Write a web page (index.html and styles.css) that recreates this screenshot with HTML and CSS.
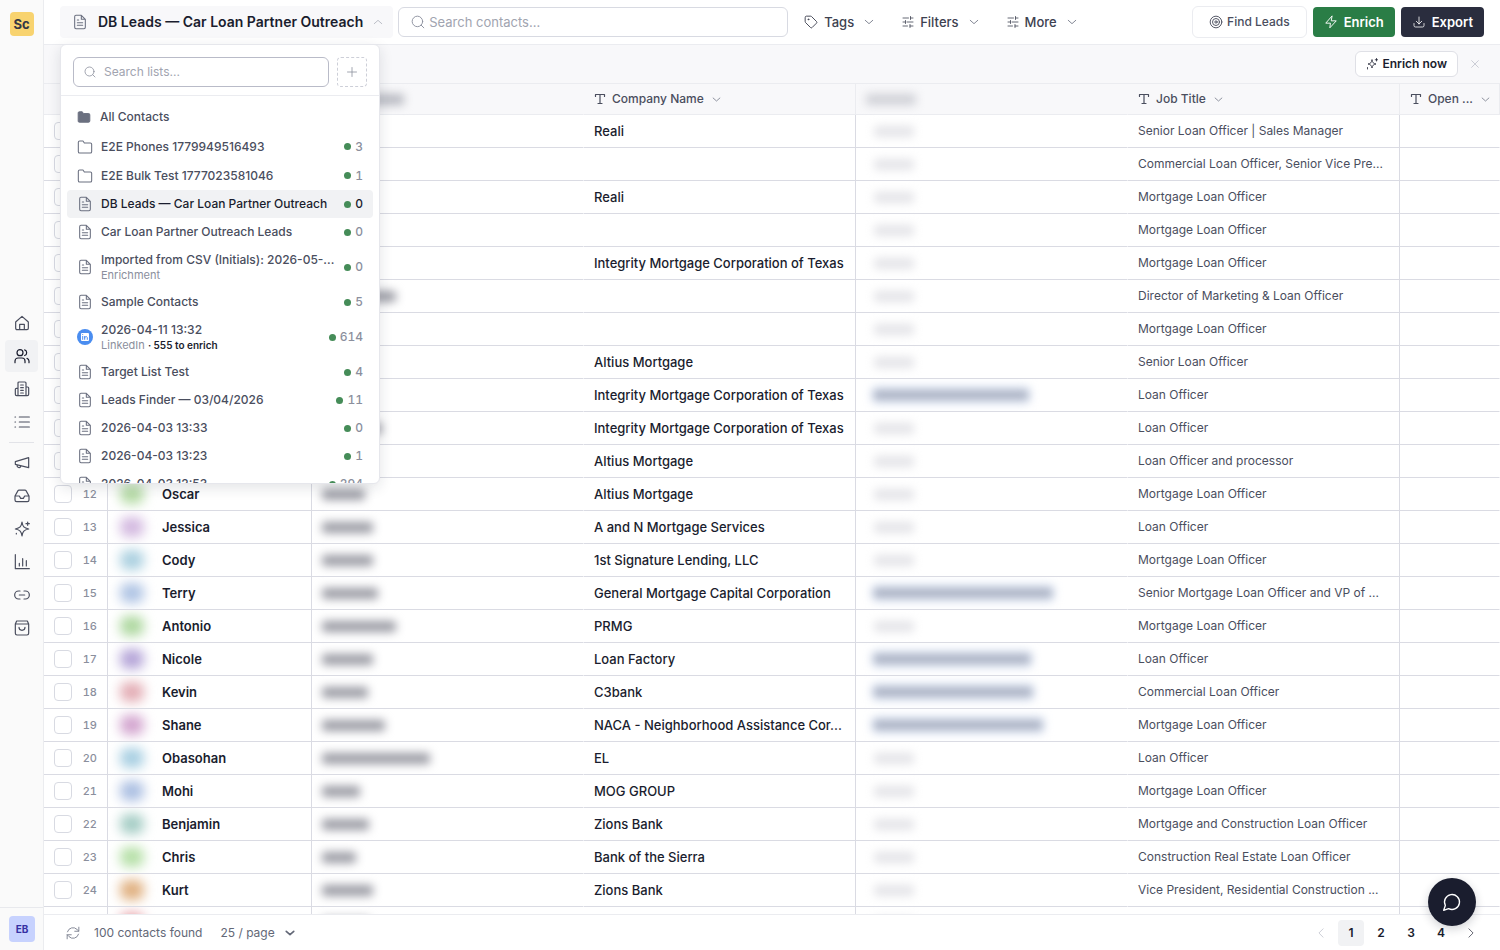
FILE: index.html
```html
<!DOCTYPE html>
<html lang="en">
<head>
<meta charset="utf-8">
<title>Contacts</title>
<meta name="viewport" content="width=device-width, initial-scale=1">
<link rel="stylesheet" href="styles.css">
</head>
<body>
<svg class="sprite" aria-hidden="true">
  <symbol id="file" viewBox="0 0 24 24"><path d="M14 2H6a2 2 0 0 0-2 2v16a2 2 0 0 0 2 2h12a2 2 0 0 0 2-2V8z M14 2v6h6 M8 9h2 M8 13h8 M8 17h8"/></symbol>
  <symbol id="folder" viewBox="0 0 24 24"><path d="M22 19a2 2 0 0 1-2 2H4a2 2 0 0 1-2-2V5a2 2 0 0 1 2-2h5l2 3h9a2 2 0 0 1 2 2z"/></symbol>
  <symbol id="search" viewBox="0 0 24 24"><circle cx="11" cy="11" r="9"/><path d="m22 22-4.500-4.500"/></symbol>
  <symbol id="down" viewBox="0 0 24 24"><path d="m3 8 9 8 9-8"/></symbol>
  <symbol id="up" viewBox="0 0 24 24"><path d="m3 16 9-8 9 8"/></symbol>
  <symbol id="left" viewBox="0 0 24 24"><path d="m17 2-10 10 10 10"/></symbol>
  <symbol id="right" viewBox="0 0 24 24"><path d="m7 2 10 10L7 22"/></symbol>
  <symbol id="plus" viewBox="0 0 24 24"><path d="M12 3v18M3 12h18"/></symbol>
  <symbol id="close" viewBox="0 0 24 24"><path d="m4 4 16 16M20 4 4 20"/></symbol>
  <symbol id="tag" viewBox="0 0 24 24"><path d="M2 4a2 2 0 0 1 2-2h7.500a2 2 0 0 1 1.400.6l8.500 8.500a2 2 0 0 1 0 2.900L14 21.400a2 2 0 0 1-2.900 0L2.600 12.900A2 2 0 0 1 2 11.500z"/><circle cx="7.500" cy="7.500" r=".8"/></symbol>
  <symbol id="sliders" viewBox="0 0 24 24"><path d="M2 4h11M17 4h5M17 1v6M2 12h4M10 12h12M7 9v6M2 20h9M16 20h6M16 17v6"/></symbol>
  <symbol id="target" viewBox="0 0 24 24"><circle cx="12" cy="12" r="10"/><circle cx="12" cy="12" r="6"/><circle cx="12" cy="12" r="2"/></symbol>
  <symbol id="bolt" viewBox="0 0 24 24"><path d="M13.500 2 3 14h8l-1 8L21 10h-8z"/></symbol>
  <symbol id="download" viewBox="0 0 24 24"><path d="M12 2v14M6.500 10.500 12 16l5.500-5.500M2 15v4a3 3 0 0 0 3 3h14a3 3 0 0 0 3-3v-4"/></symbol>
  <symbol id="spark" viewBox="0 0 24 24"><path d="M12 4c.8 5.200 2.800 7.200 8 8-5.200.8-7.200 2.800-8 8-.8-5.200-2.800-7.200-8-8 5.200-.8 7.200-2.800 8-8z M21 1v5M18.500 3.500h5M3 19v3"/></symbol>
  <symbol id="text" viewBox="0 0 24 24"><path d="M3 7V3h18v4M12 3v18M8 21h8"/></symbol>
  <symbol id="home" viewBox="0 0 24 24"><path d="M2.500 10.500 12 2l9.500 8.500V20a2 2 0 0 1-2 2h-15a2 2 0 0 1-2-2z M8.500 22v-8h7v8"/></symbol>
  <symbol id="users" viewBox="0 0 24 24"><circle cx="9" cy="7" r="4.500"/><path d="M1.500 22v-2.500A4.500 4.500 0 0 1 6 15h6a4.500 4.500 0 0 1 4.500 4.500V22M16 2.800a4.500 4.500 0 0 1 0 8.500M19.500 15.500a4.500 4.500 0 0 1 3 4V22"/></symbol>
  <symbol id="building" viewBox="0 0 24 24"><path d="M6 22V3a1.500 1.500 0 0 1 1.500-1.500h9A1.500 1.500 0 0 1 18 3v19M6 11H3.500A1.500 1.500 0 0 0 2 12.500V20a2 2 0 0 0 2 2h16a2 2 0 0 0 2-2V10.500A1.500 1.500 0 0 0 20.500 9H18M10 6h4M10 10h4M10 14h4M10 18h4"/></symbol>
  <symbol id="list" viewBox="0 0 24 24"><path d="M8 4.500h15M8 12h15M8 19.500h15M1.500 4.500h.8M1.500 12h.8M1.500 19.500h.8"/></symbol>
  <symbol id="horn" viewBox="0 0 24 24"><path d="m2 10 20-6v15L2 14zM10 17.500a3 3 0 0 1-5.500-1.700"/></symbol>
  <symbol id="inbox" viewBox="0 0 24 24"><path d="M22.500 12H16l-2 3.500h-4L8 12H1.500M6 4 1.500 12v6a2.500 2.500 0 0 0 2.500 2.500h16a2.500 2.500 0 0 0 2.500-2.500v-6L18 4a2 2 0 0 0-1.500-.8h-9A2 2 0 0 0 6 4z"/></symbol>
  <symbol id="stars" viewBox="0 0 24 24"><path d="M12 1.500c1 7 3 9 10 10.500-7 1.500-9 3.500-10 10.500C11 15.500 9 13.500 2 12c7-1.500 9-3.500 10-10.500zM20.500 1.500v5M18 4h5M3.500 18.500v1"/></symbol>
  <symbol id="chart" viewBox="0 0 24 24"><path d="M2 1v21h21M8 18v-4M13 18V7M18.500 18V10"/></symbol>
  <symbol id="link" viewBox="0 0 24 24"><path d="M9 18H7A6 6 0 0 1 7 6h2M15 6h2a6 6 0 0 1 0 12h-2M8 12h8"/></symbol>
  <symbol id="bag" viewBox="0 0 24 24"><path d="m2 6 2-4.500h16L22 6v14a2.500 2.500 0 0 1-2.500 2.500h-15A2.500 2.500 0 0 1 2 20zM2 6h20M16.500 11a4.500 4.500 0 0 1-9 0"/></symbol>
  <symbol id="refresh" viewBox="0 0 24 24"><path d="M22 2v7h-7M2 22v-7h7M2.500 10A9.800 9.800 0 0 1 19 6l3 3M21.500 14A9.800 9.800 0 0 1 5 18l-3-3"/></symbol>
  <symbol id="chat" viewBox="0 0 24 24"><path d="M7.900 20A9 9 0 1 0 4 16.100L2 22z"/></symbol>
</svg>

<div class="app">
  <aside class="sidebar">
    <a class="logo" href="#">Sc</a>
    <nav class="nav" aria-label="Main">
      <a href="#" aria-label="Home"><svg><use href="#home"/></svg></a>
      <a href="#" class="active" aria-label="Contacts"><svg><use href="#users"/></svg></a>
      <a href="#" aria-label="Companies"><svg><use href="#building"/></svg></a>
      <a href="#" aria-label="Lists"><svg><use href="#list"/></svg></a>
      <hr>
      <a href="#" aria-label="Campaigns"><svg><use href="#horn"/></svg></a>
      <a href="#" aria-label="Inbox"><svg><use href="#inbox"/></svg></a>
      <a href="#" aria-label="Assistant"><svg><use href="#stars"/></svg></a>
      <a href="#" aria-label="Reports"><svg><use href="#chart"/></svg></a>
      <a href="#" aria-label="Links"><svg><use href="#link"/></svg></a>
      <a href="#" aria-label="Store"><svg><use href="#bag"/></svg></a>
    </nav>
    <div class="account"><button class="avatar" type="button">EB</button></div>
  </aside>

  <main class="main">
    <header class="topbar">
      <div class="picker">
        <button class="picker-toggle" type="button" aria-expanded="true">
          <svg class="i16"><use href="#file"/></svg><span>DB Leads — Car Loan Partner Outreach</span><svg class="i10 faint"><use href="#up"/></svg>
        </button>
        <section class="panel" aria-label="Lists">
          <div class="panel-head">
            <label class="field list-search"><svg class="i12"><use href="#search"/></svg><input type="text" placeholder="Search lists..." aria-label="Search lists"></label>
            <button class="add" type="button" aria-label="New list"><svg class="i12"><use href="#plus"/></svg></button>
          </div>
          <div class="lists">
            <button class="item all" type="button"><svg class="i14 solid"><use href="#folder"/></svg><span class="label">All Contacts</span></button>
            <button class="item dir" type="button"><svg class="i16"><use href="#folder"/></svg><span class="label">E2E Phones 1779949516493</span><span class="count">3</span></button>
            <button class="item dir" type="button"><svg class="i16"><use href="#folder"/></svg><span class="label">E2E Bulk Test 1777023581046</span><span class="count">1</span></button>
            <button class="item current" type="button"><svg class="i16"><use href="#file"/></svg><span class="label">DB Leads — Car Loan Partner Outreach</span><span class="count">0</span></button>
            <button class="item" type="button"><svg class="i16"><use href="#file"/></svg><span class="label">Car Loan Partner Outreach Leads</span><span class="count">0</span></button>
            <button class="item tall" type="button"><svg class="i16"><use href="#file"/></svg><span class="label">Imported from CSV (Initials): 2026-05-...<small>Enrichment</small></span><span class="count">0</span></button>
            <button class="item" type="button"><svg class="i16"><use href="#file"/></svg><span class="label">Sample Contacts</span><span class="count">5</span></button>
            <button class="item tall" type="button"><svg class="linkedin" viewBox="0 0 16 16"><circle cx="8" cy="8" r="8" fill="#4a8df0" stroke="none"/><rect x="4" y="4" width="8" height="8" rx="1" fill="#fff" stroke="none"/><path d="M5.700 7.400v3M5.700 5.500v.2M7.700 10.400v-3M7.700 8.800c0-1.700 2.600-1.700 2.600 0v1.600" stroke="#4a8df0"/></svg><span class="label">2026-04-11 13:32<small>LinkedIn <b>· 555 to enrich</b></small></span><span class="count">614</span></button>
            <button class="item" type="button"><svg class="i16"><use href="#file"/></svg><span class="label">Target List Test</span><span class="count">4</span></button>
            <button class="item" type="button"><svg class="i16"><use href="#file"/></svg><span class="label">Leads Finder — 03/04/2026</span><span class="count">11</span></button>
            <button class="item" type="button"><svg class="i16"><use href="#file"/></svg><span class="label">2026-04-03 13:33</span><span class="count">0</span></button>
            <button class="item" type="button"><svg class="i16"><use href="#file"/></svg><span class="label">2026-04-03 13:23</span><span class="count">1</span></button>
            <button class="item" type="button"><svg class="i16"><use href="#file"/></svg><span class="label">2026-04-03 12:53</span><span class="count">294</span></button>
          </div>
        </section>
      </div>
      <label class="field contact-search"><svg class="i14"><use href="#search"/></svg><input type="text" placeholder="Search contacts..." aria-label="Search contacts"></label>
      <div class="tools">
        <button type="button"><svg class="i14"><use href="#tag"/></svg>Tags<svg class="i10"><use href="#down"/></svg></button>
        <button type="button"><svg class="i12"><use href="#sliders"/></svg>Filters<svg class="i10"><use href="#down"/></svg></button>
        <button type="button"><svg class="i12"><use href="#sliders"/></svg>More<svg class="i10"><use href="#down"/></svg></button>
      </div>
      <div class="actions">
        <button class="find" type="button"><svg class="i14"><use href="#target"/></svg>Find Leads</button>
        <button class="enrich" type="button"><svg class="i14"><use href="#bolt"/></svg>Enrich</button>
        <button class="export" type="button"><svg class="i12"><use href="#download"/></svg>Export</button>
      </div>
    </header>

    <div class="banner">
      <button class="enrich-now" type="button"><svg class="i12"><use href="#spark"/></svg>Enrich now</button>
      <button class="dismiss" type="button" aria-label="Dismiss"><svg class="i10"><use href="#close"/></svg></button>
    </div>

    <div class="grid">
      <table>
        <colgroup><col class="c-num"><col class="c-first"><col class="c-std"><col class="c-std"><col class="c-std"><col class="c-std"><col></colgroup>
        <thead>
          <tr>
            <th></th><th></th>
            <th class="open-edge"><span class="smudge head-last"></span></th>
            <th><div class="th"><svg class="i12"><use href="#text"/></svg><span>Company Name</span><svg class="i8"><use href="#down"/></svg></div></th>
            <th class="open-edge"><span class="smudge head-email"></span></th>
            <th><div class="th"><svg class="i12"><use href="#text"/></svg><span>Job Title</span><svg class="i8"><use href="#down"/></svg></div></th>
            <th><div class="th"><svg class="i12"><use href="#text"/></svg><span>Open ...</span><svg class="i8"><use href="#down"/></svg></div></th>
          </tr>
        </thead>
        <tbody id="rows"></tbody>
      </table>
    </div>

    <footer class="footer">
      <button class="reload" type="button" aria-label="Refresh"><svg class="i14"><use href="#refresh"/></svg></button>
      <span class="total">100 contacts found</span>
      <span class="size"><select aria-label="Rows per page"><option>25 / page</option></select><svg class="i10"><use href="#down"/></svg></span>
      <nav class="pages" aria-label="Pages">
        <button type="button" aria-label="Previous" disabled><svg class="i10"><use href="#left"/></svg></button>
        <button type="button" class="on">1</button>
        <button type="button">2</button>
        <button type="button">3</button>
        <button type="button">4</button>
        <button type="button" aria-label="Next"><svg class="i10"><use href="#right"/></svg></button>
      </nav>
    </footer>
  </main>
  <button class="chat" type="button" aria-label="Chat"><svg><use href="#chat"/></svg></button>
</div>
<script src="app.js"></script>
</body>
</html>
```

FILE: styles.css
```css
* { box-sizing: border-box; }
body { margin: 0; font: 500 13px/16px Inter, sans-serif; color: #1a1d2e; background: #fff; }
button, input, select { font: inherit; color: inherit; }
button { border: 0; padding: 0; background: none; cursor: pointer; }
a { color: inherit; text-decoration: none; }
svg { fill: none; stroke: currentColor; stroke-width: 1.6; stroke-linecap: round; stroke-linejoin: round; flex: none; }
.sprite { display: none; }
.i8 { width: 9px; height: 9px; }
.i10 { width: 10px; height: 10px; }
.i12 { width: 12px; height: 12px; }
.i14 { width: 14px; height: 14px; }
.i16 { width: 16px; height: 16px; }
.faint { color: #9da1ad; }

.app { display: flex; height: 100vh; }
.sidebar { width: 44px; flex: none; display: flex; flex-direction: column; align-items: center; background: #fafafa; border-right: 1px solid #ebecef; }
.logo { width: 24px; height: 24px; margin-top: 12px; border-radius: 4px; background: #f8d36f; color: #333745; font-weight: 700; line-height: 24px; text-align: center; }
.nav { flex: 1; width: 100%; padding-top: 8px; display: flex; flex-direction: column; justify-content: center; align-items: center; gap: 1px; color: #4a4e5e; }
.nav a { width: 33px; height: 32px; display: grid; place-items: center; border-radius: 4px; }
.nav svg { width: 16px; height: 16px; stroke-width: 1.8; }
.nav .active { background: #f1f2f4; color: #1a1d2e; }
.nav hr { width: 25px; margin: 3px 0; border: 0; border-top: 1px solid #e2e3e8; }
.account { width: 100%; padding: 8px 0 8px 9px; border-top: 1px solid #e8e9ed; }
.avatar { display: block; width: 26px; height: 26px; border-radius: 4px; background: #c7d2fe; color: #3730a3; font-size: 10px; font-weight: 700; }

.main { flex: 1; min-width: 0; display: flex; flex-direction: column; }
.topbar { display: flex; align-items: center; height: 45px; flex: none; padding: 0 16px; border-bottom: 1px solid #ebecf0; }
.picker { position: relative; }
.picker-toggle { display: flex; align-items: center; height: 32px; padding: 0 10px 0 12px; gap: 10px; border-radius: 4px; background: #f8f8fa; font-size: 14px; font-weight: 600; white-space: nowrap; }
.picker-toggle svg:first-child { color: #6b7080; }
.field { display: flex; align-items: center; height: 30px; border: 1px solid #d8dae2; border-radius: 6px; background: #fff; color: #8b8f9d; }
.field input { flex: 1; min-width: 0; border: 0; outline: 0; padding: 0; background: none; font-weight: 400; color: #1a1d2e; }
.field input::placeholder { color: #a1a4b0; opacity: 1; }
.contact-search { flex: 0 1 390px; margin-left: 5px; padding: 0 12px; gap: 4px; }
.tools { display: flex; gap: 28px; margin-left: 16px; color: #3d4150; }
.tools button { display: flex; align-items: center; gap: 6px; height: 30px; }
.tools svg:last-child { margin-left: 4px; color: #6b7080; stroke-width: 2; }
.actions { display: flex; align-items: center; gap: 6px; margin-left: auto; }
.actions button { display: flex; align-items: center; height: 30px; padding: 0 11px; gap: 6px; border-radius: 4px; color: #fff; font-weight: 600; white-space: nowrap; }
.actions .find { height: 32px; padding: 0 16px; gap: 4px; border: 1px solid #ebecf0; border-radius: 6px; color: #4a4e5e; font-size: 12px; font-weight: 500; }
.actions .enrich { background: #2a7d46; }
.actions .export { background: #2a2d3e; gap: 7px; padding-left: 12px; }

.panel { position: absolute; z-index: 5; top: 38px; left: 0; width: 320px; height: 440px; display: flex; flex-direction: column; overflow: hidden; border: 1px solid #e6e7ec; border-radius: 6px; background: #fff; box-shadow: 0 4px 14px rgba(26, 29, 46, .12); font-size: 12px; }
.panel-head { display: flex; gap: 8px; padding: 12px 12px 8px; border-bottom: 1px solid #ebecf0; }
.list-search { flex: 1; padding: 0 10px; gap: 8px; border-color: #b9bbc8; }
.add { display: grid; place-items: center; width: 30px; height: 30px; border: 1px dashed #cdcfd8; border-radius: 4px; color: #8b8f9d; }
.lists { flex: 1; overflow: hidden; padding: 6px; }
.item { display: flex; align-items: center; width: 100%; height: 28px; padding: 0 10px; gap: 8px; border-radius: 4px; color: #4a4e5e; text-align: left; }
.item.all { height: 30px; gap: 9px; }
.item.dir { height: 29px; }
.item.tall { height: 42px; }
.item.current { background: #f1f2f4; color: #1a1d2e; }
.item svg { color: #6b7080; }
.item .solid { fill: #6b7080; }
.item .linkedin { width: 16px; height: 16px; stroke-width: 1; }
.label { flex: 1; min-width: 0; overflow: hidden; text-overflow: ellipsis; white-space: nowrap; }
.label small { display: block; font-size: 11px; line-height: 14px; font-weight: 400; color: #8b8f9d; }
.label b { font-size: 10px; font-weight: 600; color: #1a1d2e; }
.count { display: flex; align-items: center; gap: 4px; font-variant-numeric: tabular-nums; color: #8b8f9d; }
.current .count { color: #1a1d2e; }
.count::before { content: ""; width: 7px; height: 7px; border-radius: 50%; background: #458c58; }

.banner { display: flex; align-items: center; justify-content: flex-end; gap: 12px; height: 39px; flex: none; padding: 0 20px; border-bottom: 1px solid #ebecf0; background: #f8f8fa; }
.enrich-now { display: flex; align-items: center; gap: 4px; height: 26px; padding: 0 10px; border: 1px solid #dfe0e6; border-radius: 6px; background: #fff; font-size: 12px; font-weight: 600; }
.dismiss { display: grid; color: #b4b7c2; }

.grid { flex: 1; min-height: 0; overflow: hidden; }
table { width: 100%; table-layout: fixed; border-collapse: separate; border-spacing: 0; }
.c-num { width: 64px; }
.c-first { width: 204px; }
.c-std { width: 272px; }
th { height: 31px; padding: 0 10px; background: #f8f8fa; border-bottom: 1px solid #ebecf0; border-right: 1px solid #ebecf0; text-align: left; font-size: 12px; font-weight: 500; color: #4a4e5e; }
td { height: 33px; padding: 0 10px; border-bottom: 1px solid #dadbe3; border-right: 1px solid #dadbe3; overflow: hidden; text-overflow: ellipsis; white-space: nowrap; }
th.open-edge, td.open-edge, tbody td:last-child { border-right-color: transparent; }
.th { display: flex; align-items: center; gap: 6px; white-space: nowrap; }
.th svg:last-child { margin-left: 2px; color: #6b7080; stroke-width: 2; }
.th svg:first-child { stroke-width: 2.4; }
.pick { display: flex; align-items: center; justify-content: space-between; font-size: 11px; font-variant-numeric: tabular-nums; color: #8b8f9d; }
.pick input { appearance: none; width: 18px; height: 18px; margin: 0; border: 1px solid #d8dae2; border-radius: 4px; background: #fff; }
.person { display: flex; align-items: center; gap: 18px; padding-left: 2px; font-weight: 600; }
.face { width: 24px; height: 20px; border-radius: 8px; filter: blur(6px); }
.job { font-size: 12px; font-weight: 400; color: #4a4e5e; }
.smudge { display: block; height: 11px; border-radius: 3px; background: #9a9ba4; filter: blur(5px); }
.head-last { width: 82px; background: #b6b8c0; }
.head-email { width: 50px; background: #cfd0d6; }
.none { width: 40px; margin-left: 8px; background: #e4e4e8; }
.mail { height: 20px; padding: 5px 4px; margin-left: 4px; border-radius: 8px; background: #e6edf9; filter: blur(4px); }
.mail::before { content: ""; display: block; height: 10px; background: #abb2c3; }

.footer { display: flex; align-items: center; flex: none; height: 36px; padding: 0 16px 0 22px; border-top: 1px solid #ebecf0; color: #636877; font-size: 12px; font-weight: 400; }
.reload { display: grid; color: #7d8190; }
.total { margin-left: 14px; }
.size { display: flex; align-items: center; margin-left: 18px; gap: 10px; }
.size select { appearance: none; border: 0; padding: 0; background: none; }
.size svg { stroke-width: 4; }
.pages { display: flex; gap: 4px; margin-left: auto; color: #1a1d2e; }
.pages button { display: grid; place-items: center; width: 26px; height: 26px; border-radius: 4px; font-weight: 600; }
.pages .on { background: #f1f2f4; }
.pages button:disabled { color: #b4b7c2; }
.chat { position: fixed; z-index: 6; right: 24px; bottom: 24px; display: grid; place-items: center; width: 48px; height: 48px; border-radius: 50%; background: #1a1d2e; color: #fff; box-shadow: 0 3px 10px rgba(26, 29, 46, .2); }
.chat svg { width: 20px; height: 20px; }
```

FILE: app.js
```js
// first name, avatar colour, surname width, company, email width, job title
const contacts = [
  ["", "", 40, "Reali", 0, "Senior Loan Officer | Sales Manager"],
  ["", "", 40, "", 0, "Commercial Loan Officer, Senior Vice Pre..."],
  ["", "", 40, "Reali", 0, "Mortgage Loan Officer"],
  ["", "", 40, "", 0, "Mortgage Loan Officer"],
  ["", "", 40, "Integrity Mortgage Corporation of Texas", 0, "Mortgage Loan Officer"],
  ["", "", 74, "", 0, "Director of Marketing & Loan Officer"],
  ["", "", 40, "", 0, "Mortgage Loan Officer"],
  ["", "", 40, "Altius Mortgage", 0, "Senior Loan Officer"],
  ["", "", 40, "Integrity Mortgage Corporation of Texas", 162, "Loan Officer"],
  ["", "", 60, "Integrity Mortgage Corporation of Texas", 0, "Loan Officer"],
  ["", "", 40, "Altius Mortgage", 0, "Loan Officer and processor"],
  ["Oscar", "#b5dba5", 43, "Altius Mortgage", 0, "Mortgage Loan Officer"],
  ["Jessica", "#d3b9e0", 51, "A and N Mortgage Services", 0, "Loan Officer"],
  ["Cody", "#abd0e0", 51, "1st Signature Lending, LLC", 0, "Mortgage Loan Officer"],
  ["Terry", "#afc4e4", 56, "General Mortgage Capital Corporation", 186, "Senior Mortgage Loan Officer and VP of ..."],
  ["Antonio", "#aed8a0", 74, "PRMG", 0, "Mortgage Loan Officer"],
  ["Nicole", "#b5a5d8", 51, "Loan Factory", 164, "Loan Officer"],
  ["Kevin", "#e3adb5", 46, "C3bank", 166, "Commercial Loan Officer"],
  ["Shane", "#d3a5cf", 63, "NACA - Neighborhood Assistance Cor...", 176, "Mortgage Loan Officer"],
  ["Obasohan", "#a8cfe2", 108, "EL", 0, "Loan Officer"],
  ["Mohi", "#abbfe2", 38, "MOG GROUP", 0, "Mortgage Loan Officer"],
  ["Benjamin", "#a5cdc5", 47, "Zions Bank", 0, "Mortgage and Construction Loan Officer"],
  ["Chris", "#b6e0a8", 34, "Bank of the Sierra", 0, "Construction Real Estate Loan Officer"],
  ["Kurt", "#e0b080", 51, "Zions Bank", 0, "Vice President, Residential Construction ..."],
  ["", "#e59aa0", 48, "", 0, ""]
];

document.getElementById("rows").innerHTML = contacts.map(([name, tone, last, company, mail, job], i) => `
  <tr>
    <td><label class="pick"><input type="checkbox" aria-label="Select row ${i + 1}"><span>${i + 1}</span></label></td>
    <td><div class="person"><span class="face" style="background:${tone || "transparent"}"></span>${name}</div></td>
    <td class="open-edge"><span class="smudge" style="width:${last}px"></span></td>
    <td>${company}</td>
    <td class="open-edge"><span class="smudge ${mail ? "mail" : "none"}"${mail ? ` style="width:${mail}px"` : ""}></span></td>
    <td class="job">${job.replace("&", "&amp;")}</td>
    <td></td>
  </tr>`).join("");
```
